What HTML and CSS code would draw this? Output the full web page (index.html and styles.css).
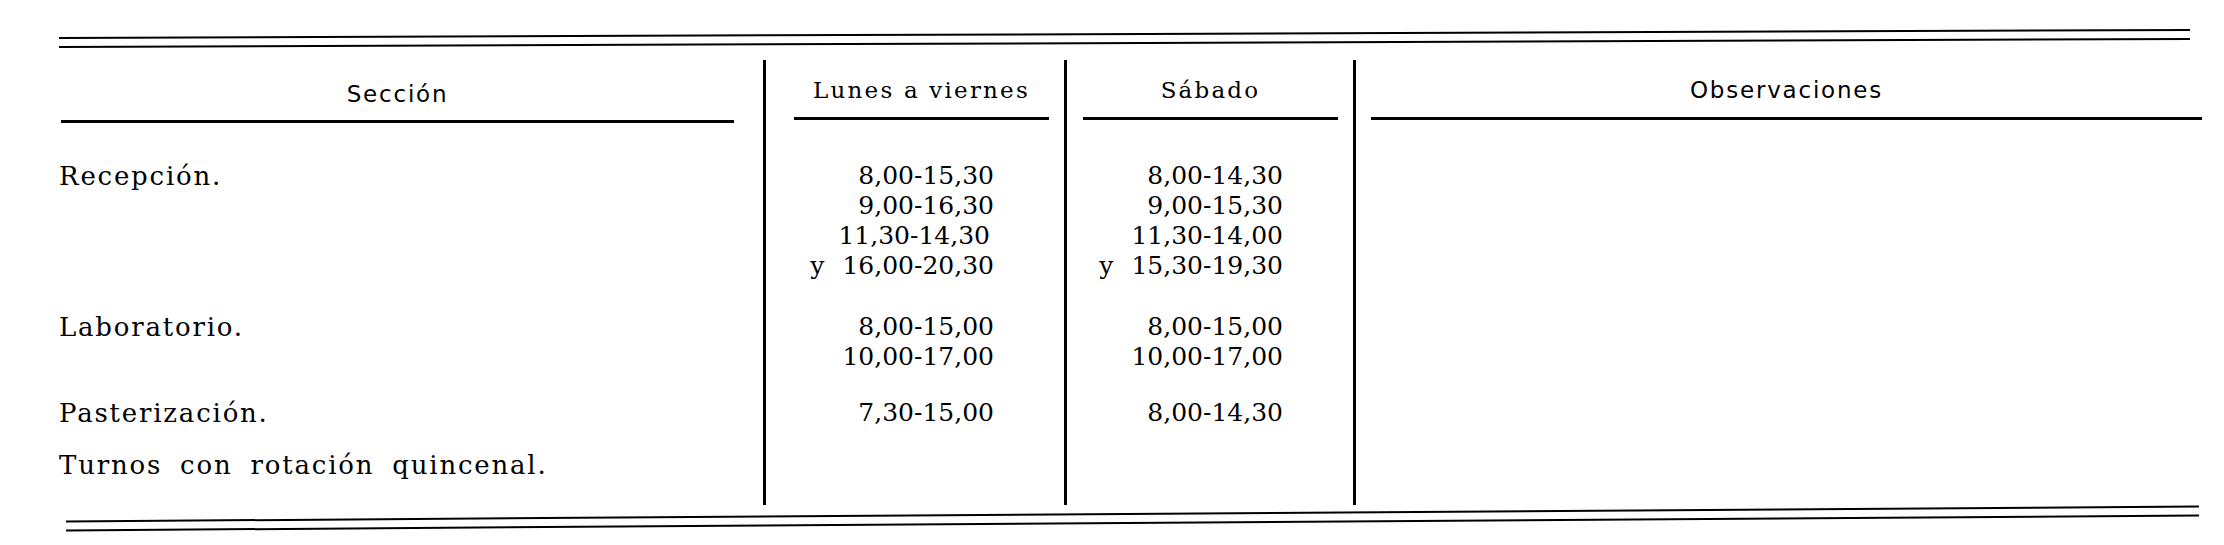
FILE: index.html
```html
<!DOCTYPE html>
<html lang="es">
<head>
<meta charset="utf-8">
<title>Horarios por sección</title>
<link rel="stylesheet" href="styles.css">
</head>
<body>
<main class="page">
  <div class="rule rule-top"></div>
  <div class="table">
    <div class="cell head c1"><div class="head-label sans">Sección</div></div>
    <div class="cell head c2 sep"><div class="head-label serif">Lunes a viernes</div></div>
    <div class="cell head c3 sep"><div class="head-label serif">Sábado</div></div>
    <div class="cell head c4 sep"><div class="head-label sans">Observaciones</div></div>

    <div class="cell r1 label">Recepción.</div>
    <div class="cell r1 times sep">8,00-15,30<br>9,00-16,30<br><span class="nudge">11,30-14,30</span><br>y 16,00-20,30</div>
    <div class="cell r1 times sep">8,00-14,30<br>9,00-15,30<br>11,30-14,00<br>y 15,30-19,30</div>
    <div class="cell r1 sep"></div>

    <div class="cell r2 label">Laboratorio.</div>
    <div class="cell r2 times sep">8,00-15,00<br>10,00-17,00</div>
    <div class="cell r2 times sep">8,00-15,00<br>10,00-17,00</div>
    <div class="cell r2 sep"></div>

    <div class="cell r3 label">Pasterización.</div>
    <div class="cell r3 times sep">7,30-15,00</div>
    <div class="cell r3 times sep">8,00-14,30</div>
    <div class="cell r3 sep"></div>

    <div class="cell r4 label">Turnos con rotación quincenal.</div>
    <div class="cell r4 sep"></div>
    <div class="cell r4 sep"></div>
    <div class="cell r4 sep"></div>
  </div>
  <div class="rule rule-bottom"></div>
</main>
</body>
</html>
```

FILE: styles.css
```css
*, *::before, *::after {
  box-sizing: border-box;
}

html, body {
  margin: 0;
  padding: 0;
  background: #ffffff;
}

body {
  width: 2224px;
  height: 545px;
  overflow: hidden;
  color: #000000;
}

.page {
  padding-top: 33px;
  padding-left: 59px;
}

.rule {
  width: 2131px;
  height: 11px;
  border-top: 2px solid #000;
  border-bottom: 2px solid #000;
}

.rule-top {
  transform: rotate(-0.215deg);
  margin-bottom: 16px;
}

.rule-bottom {
  margin-top: 8px;
  margin-left: 7px;
  width: 2133px;
  transform: rotate(-0.4deg);
}

.table {
  display: grid;
  grid-template-columns: 704px 301px 289px 834px;
}

.sep {
  border-left: 3px solid #000;
}

.head {
  padding-top: 15px;
}

.head.c1 {
  padding-top: 19px;
}

.head-label {
  line-height: 30px;
  padding-bottom: 12px;
  border-bottom: 3px solid #000;
  text-align: center;
  white-space: nowrap;
}

.c1 .head-label { margin: 0 29px 0 2px; padding-bottom: 11px; }
.c2 .head-label { margin: 0 15px 0 28px; }
.c3 .head-label { margin: 0 15px 0 16px; }
.c4 .head-label { margin: 0 -15px 0 15px; }

.sans {
  font-family: "DejaVu Sans", sans-serif;
  font-size: 23px;
  letter-spacing: 1.8px;
}

.serif {
  font-family: "DejaVu Serif", serif;
  font-size: 23px;
  letter-spacing: 2.2px;
}

.label {
  font-family: "DejaVu Serif", serif;
  font-size: 26px;
  letter-spacing: 1.8px;
  word-spacing: 8px;
  line-height: 30px;
  white-space: nowrap;
}

.times {
  font-family: "DejaVu Serif", serif;
  font-size: 25px;
  line-height: 30px;
  text-align: right;
  padding-right: 70px;
  word-spacing: 10px;
  white-space: nowrap;
}

.nudge {
  padding-right: 4px;
}

.r1 { padding-top: 38px; }
.r2 { padding-top: 31px; }
.r3 { padding-top: 26px; }
.r4 { padding-top: 22px; padding-bottom: 25px; }
```
